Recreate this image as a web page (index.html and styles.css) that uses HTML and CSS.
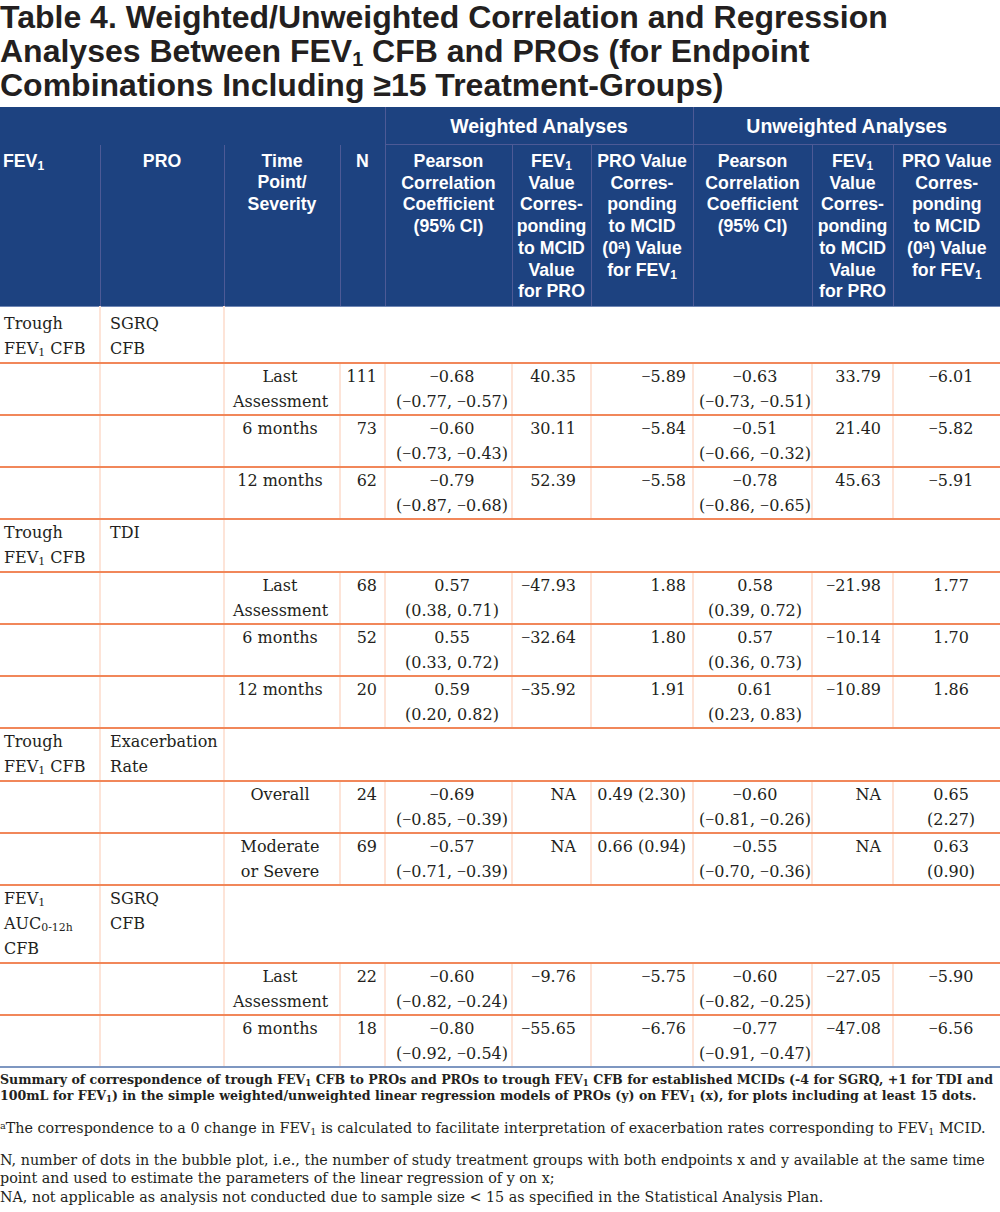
FILE: index.html
```html
<!DOCTYPE html>
<html lang="en">
<head>
<meta charset="utf-8">
<title>Table 4</title>
<link rel="stylesheet" href="styles.css">
</head>
<body>
<h1 class="title">Table 4. Weighted/Unweighted Correlation and Regression Analyses Between FEV<sub>1</sub> CFB and PROs (for Endpoint Combinations Including ≥15 Treatment-Groups)</h1>
<table class="tbl">
<colgroup>
<col class="w-fev"><col class="w-pro"><col class="w-tp"><col class="w-n"><col class="w-pw"><col class="w-fw"><col class="w-vw"><col class="w-pu"><col class="w-fu"><col class="w-vu">
</colgroup>
<thead>
<tr class="hr1">
<th colspan="4" class="blank"></th>
<th colspan="3" class="grp">Weighted Analyses</th>
<th colspan="3" class="grp">Unweighted Analyses</th>
</tr>
<tr class="hr2">
<th class="h-fev">FEV<sub>1</sub></th>
<th>PRO</th>
<th>Time<br>Point/<br>Severity</th>
<th>N</th>
<th>Pearson<br>Correlation<br>Coefficient<br>(95% CI)</th>
<th>FEV<sub>1</sub><br>Value<br>Corres-<br>ponding<br>to MCID<br>Value<br>for PRO</th>
<th>PRO Value<br>Corres-<br>ponding<br>to MCID<br>(0<sup>a</sup>) Value<br>for FEV<sub>1</sub></th>
<th>Pearson<br>Correlation<br>Coefficient<br>(95% CI)</th>
<th>FEV<sub>1</sub><br>Value<br>Corres-<br>ponding<br>to MCID<br>Value<br>for PRO</th>
<th>PRO Value<br>Corres-<br>ponding<br>to MCID<br>(0<sup>a</sup>) Value<br>for FEV<sub>1</sub></th>
</tr>
</thead>
<tbody>
<tr class="gr first">
<td class="fev">Trough<br>FEV<sub>1</sub> CFB</td><td class="pro">SGRQ<br>CFB</td><td colspan="8" class="span"></td>
</tr>
<tr>
<td class="fev"></td><td class="pro"></td><td class="tp">Last<br>Assessment</td><td class="n">111</td>
<td class="pw"><span class="mn">−</span>0.68<br>(<span class="mn">−</span>0.77, <span class="mn">−</span>0.57)</td><td class="fw">40.35</td><td class="vw"><span class="mn">−</span>5.89</td>
<td class="pu"><span class="mn">−</span>0.63<br>(<span class="mn">−</span>0.73, <span class="mn">−</span>0.51)</td><td class="fu">33.79</td><td class="vu"><span class="mn">−</span>6.01</td>
</tr>
<tr>
<td class="fev"></td><td class="pro"></td><td class="tp">6 months</td><td class="n">73</td>
<td class="pw"><span class="mn">−</span>0.60<br>(<span class="mn">−</span>0.73, <span class="mn">−</span>0.43)</td><td class="fw">30.11</td><td class="vw"><span class="mn">−</span>5.84</td>
<td class="pu"><span class="mn">−</span>0.51<br>(<span class="mn">−</span>0.66, <span class="mn">−</span>0.32)</td><td class="fu">21.40</td><td class="vu"><span class="mn">−</span>5.82</td>
</tr>
<tr>
<td class="fev"></td><td class="pro"></td><td class="tp">12 months</td><td class="n">62</td>
<td class="pw"><span class="mn">−</span>0.79<br>(<span class="mn">−</span>0.87, <span class="mn">−</span>0.68)</td><td class="fw">52.39</td><td class="vw"><span class="mn">−</span>5.58</td>
<td class="pu"><span class="mn">−</span>0.78<br>(<span class="mn">−</span>0.86, <span class="mn">−</span>0.65)</td><td class="fu">45.63</td><td class="vu"><span class="mn">−</span>5.91</td>
</tr>
<tr class="gr">
<td class="fev">Trough<br>FEV<sub>1</sub> CFB</td><td class="pro">TDI</td><td colspan="8" class="span"></td>
</tr>
<tr>
<td class="fev"></td><td class="pro"></td><td class="tp">Last<br>Assessment</td><td class="n">68</td>
<td class="pw">0.57<br>(0.38, 0.71)</td><td class="fw"><span class="mn">−</span>47.93</td><td class="vw">1.88</td>
<td class="pu">0.58<br>(0.39, 0.72)</td><td class="fu"><span class="mn">−</span>21.98</td><td class="vu">1.77</td>
</tr>
<tr>
<td class="fev"></td><td class="pro"></td><td class="tp">6 months</td><td class="n">52</td>
<td class="pw">0.55<br>(0.33, 0.72)</td><td class="fw"><span class="mn">−</span>32.64</td><td class="vw">1.80</td>
<td class="pu">0.57<br>(0.36, 0.73)</td><td class="fu"><span class="mn">−</span>10.14</td><td class="vu">1.70</td>
</tr>
<tr>
<td class="fev"></td><td class="pro"></td><td class="tp">12 months</td><td class="n">20</td>
<td class="pw">0.59<br>(0.20, 0.82)</td><td class="fw"><span class="mn">−</span>35.92</td><td class="vw">1.91</td>
<td class="pu">0.61<br>(0.23, 0.83)</td><td class="fu"><span class="mn">−</span>10.89</td><td class="vu">1.86</td>
</tr>
<tr class="gr">
<td class="fev">Trough<br>FEV<sub>1</sub> CFB</td><td class="pro">Exacerbation<br>Rate</td><td colspan="8" class="span"></td>
</tr>
<tr>
<td class="fev"></td><td class="pro"></td><td class="tp">Overall</td><td class="n">24</td>
<td class="pw"><span class="mn">−</span>0.69<br>(<span class="mn">−</span>0.85, <span class="mn">−</span>0.39)</td><td class="fw">NA</td><td class="vw">0.49 (2.30)</td>
<td class="pu"><span class="mn">−</span>0.60<br>(<span class="mn">−</span>0.81, <span class="mn">−</span>0.26)</td><td class="fu">NA</td><td class="vu">0.65<br>(2.27)</td>
</tr>
<tr>
<td class="fev"></td><td class="pro"></td><td class="tp">Moderate<br>or Severe</td><td class="n">69</td>
<td class="pw"><span class="mn">−</span>0.57<br>(<span class="mn">−</span>0.71, <span class="mn">−</span>0.39)</td><td class="fw">NA</td><td class="vw">0.66 (0.94)</td>
<td class="pu"><span class="mn">−</span>0.55<br>(<span class="mn">−</span>0.70, <span class="mn">−</span>0.36)</td><td class="fu">NA</td><td class="vu">0.63<br>(0.90)</td>
</tr>
<tr class="gr">
<td class="fev">FEV<sub>1</sub><br>AUC<sub>0-12h</sub><br>CFB</td><td class="pro">SGRQ<br>CFB</td><td colspan="8" class="span"></td>
</tr>
<tr>
<td class="fev"></td><td class="pro"></td><td class="tp">Last<br>Assessment</td><td class="n">22</td>
<td class="pw"><span class="mn">−</span>0.60<br>(<span class="mn">−</span>0.82, <span class="mn">−</span>0.24)</td><td class="fw"><span class="mn">−</span>9.76</td><td class="vw"><span class="mn">−</span>5.75</td>
<td class="pu"><span class="mn">−</span>0.60<br>(<span class="mn">−</span>0.82, <span class="mn">−</span>0.25)</td><td class="fu"><span class="mn">−</span>27.05</td><td class="vu"><span class="mn">−</span>5.90</td>
</tr>
<tr class="last">
<td class="fev"></td><td class="pro"></td><td class="tp">6 months</td><td class="n">18</td>
<td class="pw"><span class="mn">−</span>0.80<br>(<span class="mn">−</span>0.92, <span class="mn">−</span>0.54)</td><td class="fw"><span class="mn">−</span>55.65</td><td class="vw"><span class="mn">−</span>6.76</td>
<td class="pu"><span class="mn">−</span>0.77<br>(<span class="mn">−</span>0.91, <span class="mn">−</span>0.47)</td><td class="fu"><span class="mn">−</span>47.08</td><td class="vu"><span class="mn">−</span>6.56</td>
</tr>
</tbody>
</table>
<div class="notes">
<p class="fn1">Summary of correspondence of trough FEV<sub>1</sub> CFB to PROs and PROs to trough FEV<sub>1</sub> CFB for established MCIDs (-4 for SGRQ, +1 for TDI and 100mL for FEV<sub>1</sub>) in the simple weighted/unweighted linear regression models of PROs (y) on FEV<sub>1</sub> (x), for plots including at least 15 dots.</p>
<p class="fn2"><sup>a</sup>The correspondence to a 0 change in FEV<sub>1</sub> is calculated to facilitate interpretation of exacerbation rates corresponding to FEV<sub>1</sub> MCID.</p>
<p class="fn3">N, number of dots in the bubble plot, i.e., the number of study treatment groups with both endpoints x and y available at the same time point and used to estimate the parameters of the linear regression of y on x;<br>NA, not applicable as analysis not conducted due to sample size &lt; 15 as specified in the Statistical Analysis Plan.</p>
</div>
</body>
</html>
```
FILE: styles.css
```css
html, body {
  margin: 0;
  padding: 0;
  background: #ffffff;
}
body {
  width: 1000px;
  font-family: "DejaVu Serif", serif;
  color: #231f20;
}
sub, sup {
  line-height: 0;
  font-size: 0.68em;
}
sub { vertical-align: -0.22em; }
sup { vertical-align: 0.45em; }

.title {
  margin: 0 0 5px;
  font-family: "Liberation Sans", Arial, sans-serif;
  font-weight: bold;
  font-size: 32px;
  line-height: 34px;
  color: #231f20;
}
.title sub {
  font-size: 0.62em;
  vertical-align: -0.18em;
}

.tbl {
  width: 1000px;
  border-collapse: collapse;
  table-layout: fixed;
}
.w-fev { width: 100px; }
.w-pro { width: 124px; }
.w-tp { width: 116px; }
.w-n { width: 45px; }
.w-pw { width: 127px; }
.w-fw { width: 79px; }
.w-vw { width: 102px; }
.w-pu { width: 119px; }
.w-fu { width: 81px; }
.w-vu { width: 107px; }

.tbl thead th {
  background: #1d4280;
  color: #ffffff;
  font-family: "Liberation Sans", Arial, sans-serif;
  font-weight: bold;
  white-space: nowrap;
}
.hr1 th {
  height: 37px;
  padding: 0;
  font-size: 19.5px;
  line-height: 24px;
  vertical-align: middle;
  text-align: center;
}
.hr1 .grp {
  border-left: 1px solid #4d5a96;
  border-bottom: 1px solid #4d5a96;
}
.hr2 th {
  font-size: 17.7px;
  line-height: 21.7px;
  padding: 6px 1px 3px;
  vertical-align: top;
  text-align: center;
  border-left: 1px solid #4d5a96;
  border-bottom: 1px solid #6f86b4;
}
.hr2 .h-fev {
  border-left: none;
  text-align: left;
  padding-left: 3px;
}

.tbl tbody td {
  font-size: 16px;
  line-height: 25px;
  padding: 0;
  vertical-align: top;
  white-space: nowrap;
  border-left: 2px solid #fde4d8;
  border-bottom: 2px solid #f1875a;
}
.tbl tbody td.fev { border-left: none; }
.tbl tbody tr.first td { padding-top: 4px; }
.tbl tbody tr.gr td { padding-bottom: 1px; }
.tbl tbody tr.last td { border-bottom: 2px solid #7e97c1; }

.mn { font-family: "Liberation Serif", serif; }

.fev { text-align: left; padding-left: 4px !important; }
.pro { text-align: left; padding-left: 9px !important; }
.tp { text-align: center; padding-left: 8px !important; padding-right: 12px !important; }
.n { text-align: right; padding-right: 7px !important; }
.pw { text-align: center; padding-left: 7px !important; }
.fw { text-align: right; padding-right: 14px !important; }
.vw { text-align: right; padding-right: 6px !important; }
.pu { text-align: center; padding-left: 5px !important; }
.fu { text-align: right; padding-right: 11px !important; }
.vu { text-align: center; padding-left: 8px !important; }

.notes {
  font-family: "DejaVu Serif", serif;
  color: #231f20;
}
.notes p { margin: 0; }
.fn1 {
  margin-top: 4px !important;
  font-size: 12.6px;
  font-weight: bold;
  line-height: 16px;
}
.fn2 {
  margin-top: 15px !important;
  font-size: 14.3px;
  line-height: 18px;
}
.fn3 {
  margin-top: 14px !important;
  font-size: 14.3px;
  line-height: 18.5px;
}
```
